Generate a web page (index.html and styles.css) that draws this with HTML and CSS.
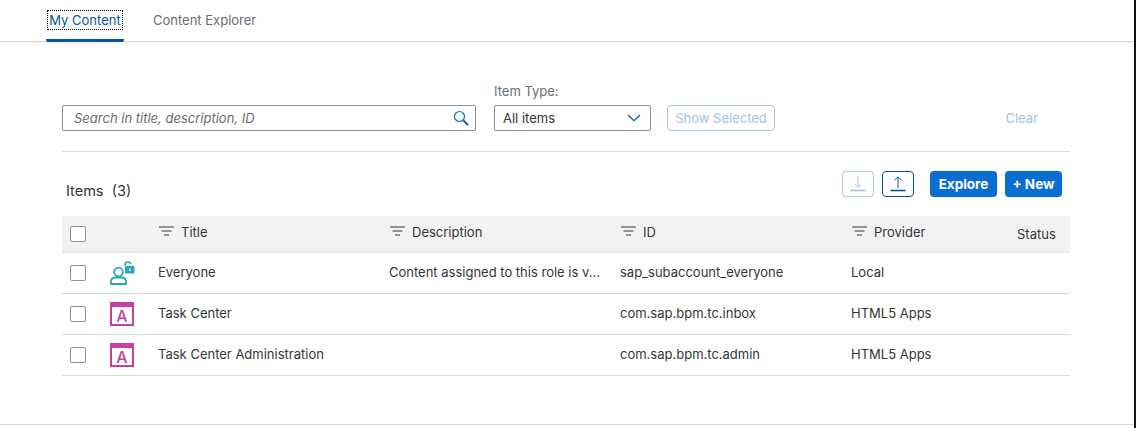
FILE: index.html
```html
<!DOCTYPE html>
<html lang="en">
<head>
<meta charset="utf-8">
<title>My Content</title>
<link rel="stylesheet" href="styles.css">
</head>
<body>
<div class="page">
  <nav class="tabs">
    <div class="tab tab-active"><span class="tab-label">My Content</span></div>
    <div class="tab"><span class="tab-label">Content Explorer</span></div>
  </nav>
  <main class="content">
    <section class="filters">
      <div class="search">
        <span class="search-text">Search in title, description, ID</span>
        <svg class="search-icon" width="16" height="16" viewBox="0 0 16 16"><circle cx="6.500" cy="6.500" r="5" fill="none" stroke="#0a6ed1" stroke-width="1.200"/><path d="M10.300 10.300 15 15" stroke="#0a4f9e" stroke-width="1.800" fill="none"/></svg>
      </div>
      <div class="field">
        <label class="field-label">Item Type:</label>
        <div class="select"><span>All items</span>
          <svg width="14" height="8" viewBox="0 0 14 8"><path d="M1 1l6 5.600L13 1" fill="none" stroke="#0854a0" stroke-width="1.200"/></svg>
        </div>
      </div>
      <div class="btn-disabled">Show Selected</div>
      <div class="clear">Clear</div>
    </section>
    <section class="toolbar">
      <div class="count">Items&nbsp; (3)</div>
      <div class="actions">
        <div class="icon-btn icon-btn-off">
          <svg width="18" height="18" viewBox="0 0 18 18"><path d="M9 1v11M5.500 8.700 9 12.200l3.500-3.500" fill="none" stroke="#a5c3e3" stroke-width="1"/><path d="M1.500 15.500h15" stroke="#a5c3e3" stroke-width="1.600"/></svg>
        </div>
        <div class="icon-btn">
          <svg width="18" height="18" viewBox="0 0 18 18"><path d="M9 13V2M5.500 5.300 9 1.800l3.500 3.500" fill="none" stroke="#0854a0" stroke-width="1"/><path d="M1.500 15.500h15" stroke="#0854a0" stroke-width="1.600"/></svg>
        </div>
        <div class="btn-primary btn-explore">Explore</div>
        <div class="btn-primary btn-new">+ New</div>
      </div>
    </section>
    <section class="table">
      <div class="row row-head">
        <div class="cell-check"><span class="check"></span></div>
        <div class="cell-icon"></div>
        <div class="cell cell-sort"><svg class="filter" width="15" height="11" viewBox="0 0 15 11"><path d="M0 1h15M2.500 5h10M5 9h5" stroke="#32363a" stroke-width="1" fill="none"/></svg>Title</div>
        <div class="cell cell-sort"><svg class="filter" width="15" height="11" viewBox="0 0 15 11"><path d="M0 1h15M2.500 5h10M5 9h5" stroke="#32363a" stroke-width="1" fill="none"/></svg>Description</div>
        <div class="cell cell-sort"><svg class="filter" width="15" height="11" viewBox="0 0 15 11"><path d="M0 1h15M2.500 5h10M5 9h5" stroke="#32363a" stroke-width="1" fill="none"/></svg>ID</div>
        <div class="cell cell-sort"><svg class="filter" width="15" height="11" viewBox="0 0 15 11"><path d="M0 1h15M2.500 5h10M5 9h5" stroke="#32363a" stroke-width="1" fill="none"/></svg>Provider</div>
        <div class="cell cell-status">Status</div>
      </div>
      <div class="row">
        <div class="cell-check"><span class="check"></span></div>
        <div class="cell-icon">
          <svg width="25" height="24" viewBox="0 0 25 24"><circle cx="8.500" cy="11" r="4.300" fill="none" stroke="#2aa9b8" stroke-width="1.800"/><path d="M1 23v-2.500C1 18 3 16.500 5.500 16.500h6c2.500 0 4.500 1.500 4.500 4V23z" fill="none" stroke="#2aa9b8" stroke-width="1.800"/><path d="M15 5V3.500C15 2 16.500 1 18 1s2.700 .8 3 2.200" fill="none" stroke="#2aa9b8" stroke-width="1.500"/><rect x="15" y="5" width="9.500" height="7.500" rx="1" fill="#2aa9b8"/><rect x="19" y="7.500" width="1.500" height="2.500" fill="#fff"/></svg>
        </div>
        <div class="cell">Everyone</div>
        <div class="cell">Content assigned to this role is v...</div>
        <div class="cell">sap_subaccount_everyone</div>
        <div class="cell">Local</div>
        <div class="cell cell-status"></div>
      </div>
      <div class="row">
        <div class="cell-check"><span class="check"></span></div>
        <div class="cell-icon"><div class="app-icon">A</div></div>
        <div class="cell">Task Center</div>
        <div class="cell"></div>
        <div class="cell">com.sap.bpm.tc.inbox</div>
        <div class="cell">HTML5 Apps</div>
        <div class="cell cell-status"></div>
      </div>
      <div class="row">
        <div class="cell-check"><span class="check"></span></div>
        <div class="cell-icon"><div class="app-icon">A</div></div>
        <div class="cell">Task Center Administration</div>
        <div class="cell"></div>
        <div class="cell">com.sap.bpm.tc.admin</div>
        <div class="cell">HTML5 Apps</div>
        <div class="cell cell-status"></div>
      </div>
    </section>
  </main>
</div>
</body>
</html>
```
FILE: styles.css
```css
* { box-sizing: border-box; }
html, body { margin: 0; padding: 0; height: 100%; background: #fff; overflow: hidden; }
body {
  font-family: Inter, "Noto Sans", sans-serif;
  font-size: 13px;
  color: #32363a;
}
.page {
  width: 1136px;
  height: 428px;
  border-right: 2px solid #111;
  display: flex;
  flex-direction: column;
}
.tabs {
  height: 42px;
  flex: none;
  display: flex;
  padding-left: 46px;
  border-bottom: 1px solid #d9d9d9;
  box-shadow: 0 1px 2px rgba(0,0,0,.08);
}
.tab {
  padding: 11px 0 0;
  margin-left: 29px;
  color: #6a6d70;
  height: 41px;
  line-height: 18px;
}
.tab-active {
  width: 78px;
  margin-left: 0;
  padding: 11px 2px 0;
  color: #0854a0;
  border-bottom: 3px solid #0854a0;
  height: 42px;
  border-radius: 0 0 2px 2px;
}
.tab-active .tab-label { outline: 1px dotted #000; display: block; text-align: center; }
.content {
  flex: 1;
  padding: 0 64px 0 62px;
  border-bottom: 1px solid #d9d9d9;
  margin-bottom: 3px;
}
.filters {
  height: 110px;
  display: flex;
  align-items: flex-end;
  padding-bottom: 20px;
  border-bottom: 1px solid #d9d9d9;
}
.search {
  width: 414px;
  height: 26px;
  border: 1px solid #89919a;
  border-radius: 2px;
  display: flex;
  align-items: center;
  justify-content: space-between;
  padding: 0 6px 0 11px;
  margin-right: 18px;
}
.search-text { font-style: italic; color: #6a6d70; }
.field { display: flex; flex-direction: column; margin-right: 16px; }
.field-label { color: #6a6d70; line-height: 18px; margin-bottom: 5px; }
.select {
  width: 157px;
  height: 26px;
  border: 1px solid #89919a;
  border-radius: 2px;
  display: flex;
  align-items: center;
  justify-content: space-between;
  padding: 0 9px 0 8px;
}
.btn-disabled {
  width: 108px;
  height: 26px;
  border: 1px solid #a9c6e3;
  border-radius: 4px;
  color: #a5c3e3;
  display: flex;
  align-items: center;
  justify-content: center;
}
.clear { margin-left: auto; margin-right: 32px; color: #a5c3e3; line-height: 26px; }
.toolbar {
  height: 64px;
  display: flex;
  align-items: flex-start;
  justify-content: space-between;
  padding: 19px 8px 0 4px;
}
.count { font-size: 14.500px; line-height: 20px; padding-top: 10px; }
.actions { display: flex; }
.icon-btn {
  width: 32px;
  height: 26px;
  border: 1px solid #0854a0;
  border-radius: 4px;
  margin-right: 8px;
  display: flex;
  align-items: center;
  justify-content: center;
}
.icon-btn-off { border-color: #a9c6e3; }
.btn-primary {
  height: 26px;
  background: #0a6ed1;
  color: #fff;
  font-size: 13.500px;
  font-weight: 700;
  border-radius: 4px;
  display: flex;
  align-items: center;
  justify-content: center;
}
.btn-explore { width: 67px; margin: 0 8px; }
.btn-new { width: 57px; }
.row {
  display: grid;
  grid-template-columns: 36px 60px 231px 231px 231px 166px 1fr;
  align-items: center;
  height: 41px;
  border-bottom: 1px solid #d9d9d9;
}
.row-head {
  height: 37px;
  background: #f2f2f2;
  border-bottom: 2px solid #e8e8e8;
}
.cell-check { padding-left: 8px; display: flex; }
.check {
  width: 16px;
  height: 16px;
  border: 1px solid #89919a;
  border-radius: 2px;
  background: #fff;
  display: block;
}
.cell-icon { padding-left: 12px; display: flex; }
.cell { white-space: nowrap; display: flex; align-items: center; padding-bottom: 2px; }
.cell-sort { padding-bottom: 4px; }
.cell-status { padding-bottom: 0; }
.filter { margin: 0 7px 0 1px; }
.app-icon {
  width: 24px;
  height: 24px;
  border: 2px solid #c83f9f;
  border-top-width: 5px;
  color: #c83f9f;
  font-size: 16px;
  font-weight: 500;
  line-height: 18px;
  text-align: center;
}
```
